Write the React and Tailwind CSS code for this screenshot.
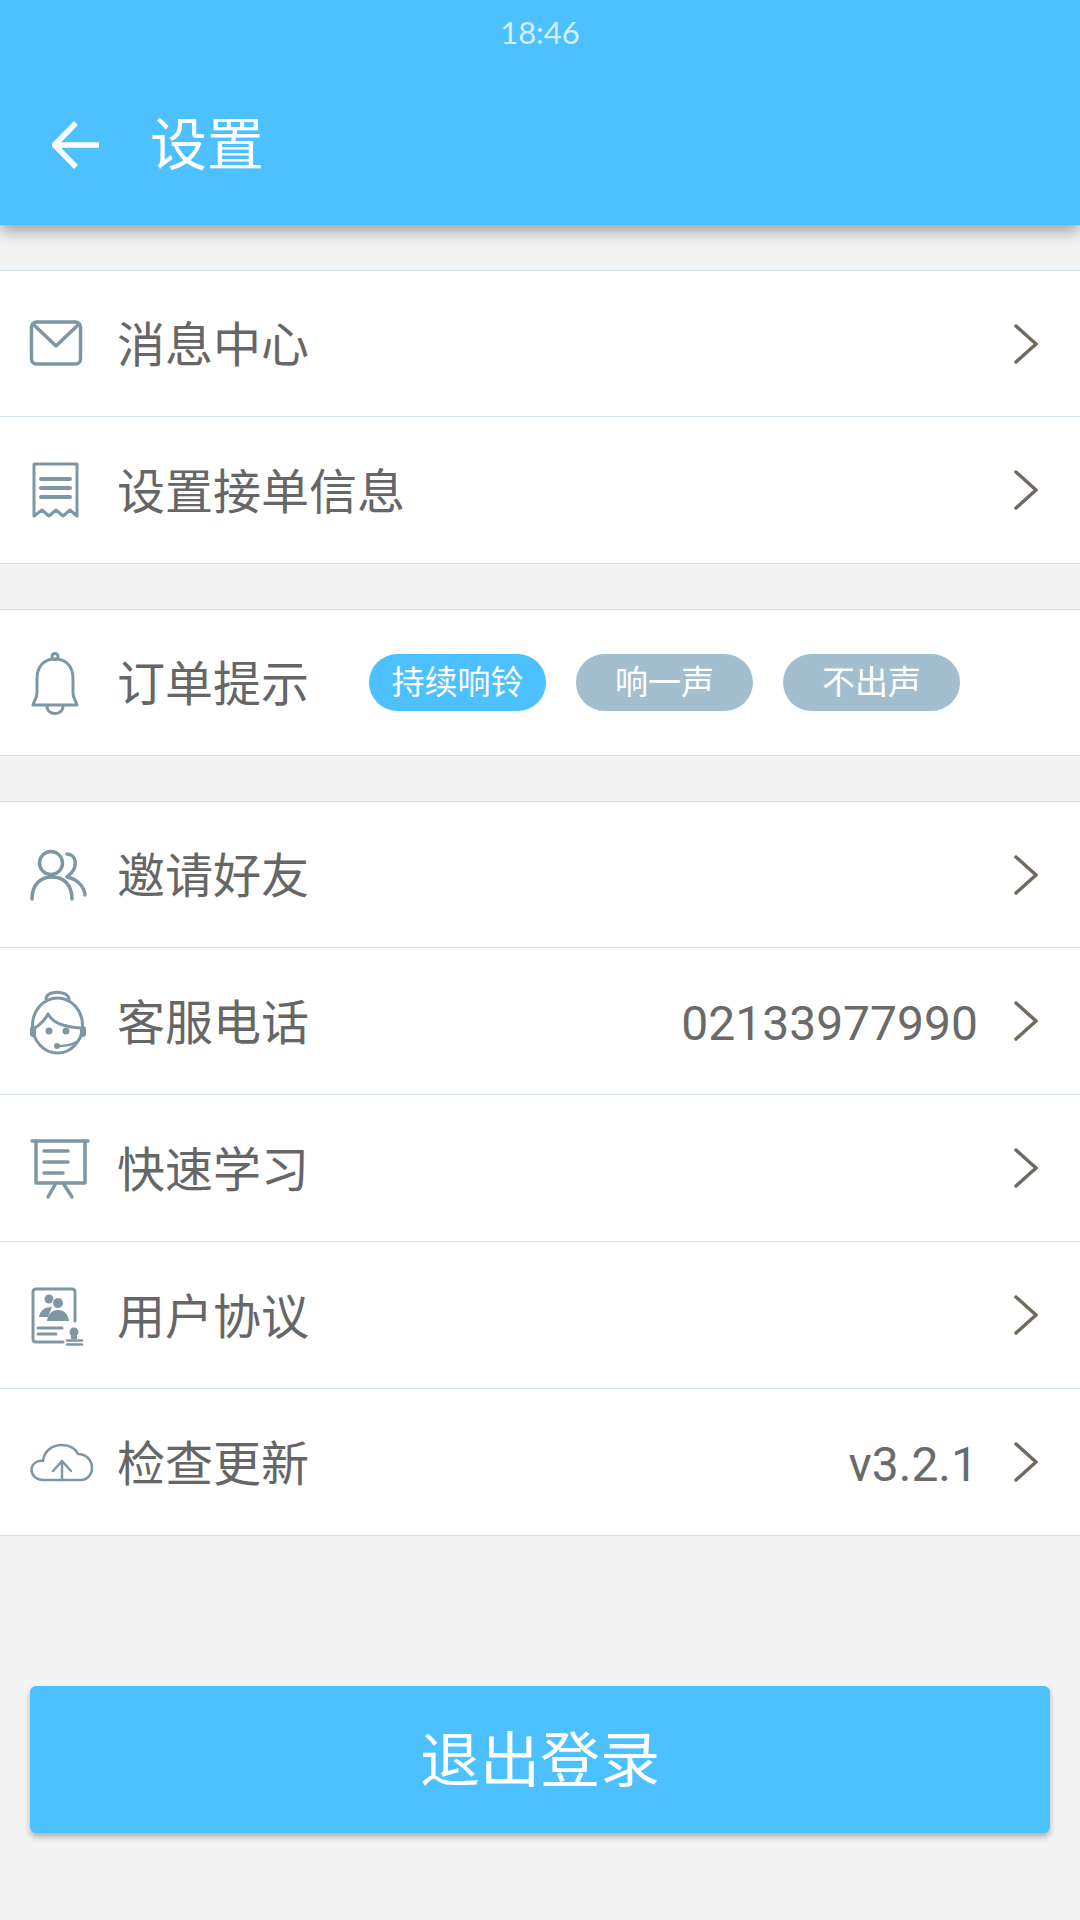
import React from 'react';

const Chevron = () => (
  <svg className="w-6 h-10 shrink-0" viewBox="0 0 24 40" fill="none" stroke="#6f6a5e" strokeWidth="3.5" strokeLinecap="round" strokeLinejoin="miter">
    <path d="M2 2 L22 20 L2 38" />
  </svg>
);

const iconProps = {
  className: 'w-16 h-16 shrink-0 overflow-visible',
  viewBox: '0 0 64 64',
  fill: 'none',
  stroke: '#7f97a4',
  strokeWidth: 3.5,
  strokeLinecap: 'round',
  strokeLinejoin: 'round',
};

const MailIcon = () => (
  <svg {...iconProps}>
    <rect x="1.5" y="10" width="49" height="42" rx="5" />
    <path d="M3 12 L26 34 L49 12" />
  </svg>
);

const ReceiptIcon = () => (
  <svg {...iconProps}>
    <path d="M4 58 V6 H47 V58 L40 52 L33 58 L26 52 L19 58 L12 52 Z" strokeWidth="3" />
    <path d="M11 21 H40 M11 30 H40 M11 39 H40" strokeWidth="4" />
  </svg>
);

const BellIcon = () => (
  <svg {...iconProps} strokeWidth="3">
    <circle cx="25" cy="5.5" r="3" />
    <path d="M25 8 C15 8 7 14 7 28 V42 C7 47 4 50 3 54 H47 C46 50 43 47 43 42 V28 C43 14 35 8 25 8 Z" />
    <path d="M17 55 C17 65 33 65 33 55" />
  </svg>
);

const FriendsIcon = () => (
  <svg {...iconProps}>
    <circle cx="21" cy="20" r="11.5" />
    <path d="M2 56 C2 42 10 34 22 34 C34 34 42 42 42 56" />
    <path d="M37 11 C46 11 50 24 37 34 C47 36 54 43 55 52" />
  </svg>
);

const AgentIcon = () => (
  <svg {...iconProps} strokeWidth="3">
    <ellipse cx="27.5" cy="36.5" rx="25" ry="27.5" />
    <path d="M16 10 C16 1 38 1 39 10" />
    <path d="M18 25 C24 36 38 38 51 39 M18 25 C14 33 10 35 5 39" />
    <circle cx="19" cy="42" r="3.5" fill="#7f97a4" stroke="none" />
    <circle cx="36" cy="42" r="3.5" fill="#7f97a4" stroke="none" />
    <rect x="0" y="37" width="6" height="11" rx="3" fill="#7f97a4" stroke="none" />
    <rect x="50" y="37" width="6" height="11" rx="3" fill="#7f97a4" stroke="none" />
    <path d="M51 47 C49 54 40 57 27 57" strokeWidth="2.5" />
    <circle cx="27" cy="57" r="3" fill="#7f97a4" stroke="none" />
  </svg>
);

const BoardIcon = () => (
  <svg {...iconProps}>
    <path d="M2 5 H58" />
    <path d="M6 5 V47 H55 V5" />
    <path d="M14 15 H38 M14 26 H38 M14 37 H33" />
    <path d="M26 47 L18 61 M33 47 L42 61" />
  </svg>
);

const AgreementIcon = () => (
  <svg {...iconProps}>
    <path d="M33 59 H6 Q3 59 3 56 V9 Q3 6 6 6 H42 Q45 6 45 9 V38" strokeWidth="3" />
    <circle cx="19" cy="16" r="4.5" fill="#7f97a4" stroke="none" />
    <path d="M9 34 C10 27 15 24 22 24 L18 34 Z" fill="#7f97a4" stroke="none" />
    <circle cx="28" cy="20" r="5.5" fill="#7f97a4" stroke="#fff" strokeWidth="1" />
    <path d="M17 38 C18 30 23 27 28 27 C33 27 38 30 39 38 Z" fill="#7f97a4" stroke="none" />
    <path d="M8 45 H32 M8 51 H26" strokeWidth="3" />
    <circle cx="44" cy="49" r="4.5" fill="#7f97a4" stroke="none" />
    <path d="M41 52 H47 V56 H41 Z" fill="#7f97a4" stroke="none" />
    <path d="M37 57.5 H52 M37 61.5 H52" strokeWidth="2.5" />
  </svg>
);

const CloudIcon = () => (
  <svg {...iconProps} strokeWidth="2.5">
    <path d="M13 50 C6 50 1.5 45 1.5 40 C1.5 34 7 30 13 31 C14 21 22 15 32 15 C40 15 46 19 48 24 C56 24 62 30 62 38 C62 45 57 50 51 50 Z" />
    <path d="M32 50 V31 M23 41 L32 31 L41 41" />
  </svg>
);

const Row = ({ icon, label, value }) => (
  <div className="h-[147px] first:h-[146px] flex items-center pl-[30px] pr-[42px] bg-white border-b border-[#d3e0e8]">
    {icon}
    <span className="ml-[23px] mt-[5px] text-[48px] leading-none text-[#666666]">{label}</span>
    <span className="ml-auto mr-[36px] mt-[5px] text-[48px] leading-none text-[#6a6a6a]">{value}</span>
    <Chevron />
  </div>
);

const Pill = ({ children, active }) => (
  <div className={`h-[57px] w-[177px] rounded-full flex items-center justify-center text-[33px] leading-none text-white ${active ? 'bg-[#4dc1ff]' : 'bg-[#a3bfcf]'}`}>
    {children}
  </div>
);

export default function App() {
  return (
    <div className="w-[1080px] h-[1920px] overflow-hidden flex flex-col bg-[#f4f4f4] font-['Roboto','Noto_Sans_CJK_SC',sans-serif]">
      {/* Header */}
      <div className="relative z-10 h-[225px] shrink-0 bg-[#4dc1ff] shadow-[0_6px_16px_rgba(0,0,0,0.36)]">
        <div className="h-[64px] flex items-center justify-center font-['Lato',sans-serif] font-normal text-[31px] text-white/75">18:46</div>
        <div className="flex items-center h-[162px] pl-[52px]">
          <svg className="w-12 h-12 shrink-0" viewBox="0 0 48 48" fill="none" stroke="#fff" strokeWidth="5.5">
            <path d="M24 2 L2.5 24 L24 46 M2.5 24 H47" />
          </svg>
          <span className="ml-[50px] text-[57px] leading-none text-white">设置</span>
        </div>
      </div>

      <div className="mt-[45px] border-t border-[#d3e0e8]">
        <Row icon={<MailIcon />} label="消息中心" />
        <Row icon={<ReceiptIcon />} label="设置接单信息" />
      </div>

      <div className="mt-[45px] border-t border-[#d3e0e8]">
        <div className="h-[146px] flex items-center pl-[30px] bg-white border-b border-[#d3e0e8]">
          <BellIcon />
          <span className="ml-[23px] mt-[5px] text-[48px] leading-none text-[#666666]">订单提示</span>
          <div className="ml-[60px] flex gap-[30px]">
            <Pill active>持续响铃</Pill>
            <Pill>响一声</Pill>
            <Pill>不出声</Pill>
          </div>
        </div>
      </div>

      <div className="mt-[45px] border-t border-[#d3e0e8]">
        <Row icon={<FriendsIcon />} label="邀请好友" />
        <Row icon={<AgentIcon />} label="客服电话" value="02133977990" />
        <Row icon={<BoardIcon />} label="快速学习" />
        <Row icon={<AgreementIcon />} label="用户协议" />
        <Row icon={<CloudIcon />} label="检查更新" value="v3.2.1" />
      </div>

      <button className="mt-[150px] mx-[30px] h-[147px] pt-[4px] shrink-0 rounded-[6px] bg-[#4dc1ff] text-white text-[60px] leading-none shadow-[0_4px_6px_rgba(0,0,0,0.28)]">
        退出登录
      </button>
    </div>
  );
}
